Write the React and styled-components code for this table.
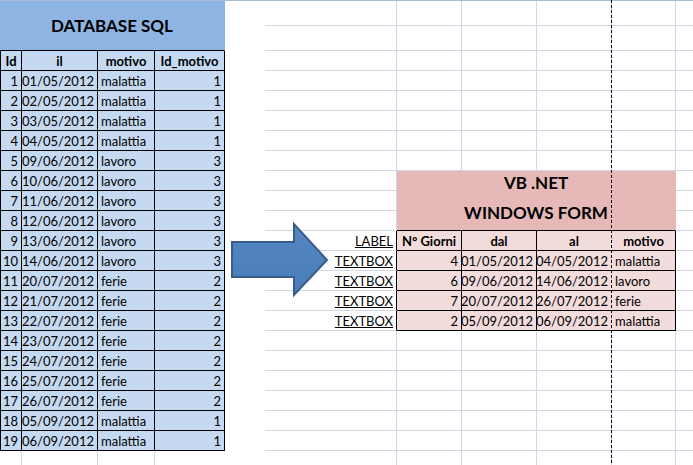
import React from 'react';
import styled, { createGlobalStyle } from 'styled-components';

/* Excel 2007 palette */
const GRID = '#D0D7E5';
const LINE = '#000';
const NONE = 'transparent';
const BLUE_HEAD = '#8DB4E3';
const BLUE_CELL = '#C5D9F1';
const PINK_HEAD = '#E6B9B8';
const PINK_CELL = '#F2DCDB';

const GlobalStyle = createGlobalStyle`
  html, body {
    margin: 0;
    padding: 0;
    background: #fff;
    overflow: hidden;
  }
  body {
    font-family: Lato, "Open Sans", "Liberation Sans", sans-serif;
    font-size: 13px;
    color: #000;
  }
`;

const Page = styled.div`
  position: relative;
  width: 693px;
  height: 465px;
  overflow: hidden;
`;

/* the worksheet: columns and rows are the spreadsheet's own sizes */
const Sheet = styled.div`
  display: grid;
  grid-template-columns: 22px 76px 57px 70px 40px 132px 65px 75px 75px 64px 40px;
  grid-template-rows: 25px 25px repeat(21, 20px);
  border-top: 1px solid #A8BCD5;
`;

const Cell = styled.div`
  display: flex;
  align-items: center;
  justify-content: ${(p) => (p.$align === 'right' ? 'flex-end' : p.$align === 'center' ? 'center' : 'flex-start')};
  padding: 0 3px;
  overflow: hidden;
  white-space: nowrap;
  background: ${(p) => p.$fill || '#fff'};
  border-right: 1px solid ${(p) => p.$right || GRID};
  border-bottom: 1px solid ${(p) => p.$bottom || GRID};
  border-left: ${(p) => (p.$left ? `1px solid ${p.$left}` : 'none')};
  font-weight: ${(p) => (p.$bold ? 700 : 400)};
  text-decoration: ${(p) => (p.$underline ? 'underline' : 'none')};
  grid-column: span ${(p) => p.$cols || 1};
  grid-row: span ${(p) => p.$rows || 1};
`;

/* merged title cells (DATABASE SQL, VB .NET) */
const Banner = styled(Cell)`
  flex-direction: column;
  justify-content: center;
  font-size: 17px;
  font-weight: 700;
  line-height: ${(p) => p.$lh || 'normal'};
  padding-bottom: ${(p) => p.$lift || 0}px;
`;

/* the dashed page-break line Excel draws over the sheet */
const PageBreak = styled.div`
  position: absolute;
  left: 611px;
  top: 0;
  width: 1px;
  height: 100%;
  background: repeating-linear-gradient(to bottom, #000 0 3px, transparent 3px 5px);
`;

/* floating block-arrow shape */
const ArrowShape = styled.svg`
  position: absolute;
  left: 228px;
  top: 220px;
`;

const LEFT_ROWS = [
  [1, '01/05/2012', 'malattia', 1],
  [2, '02/05/2012', 'malattia', 1],
  [3, '03/05/2012', 'malattia', 1],
  [4, '04/05/2012', 'malattia', 1],
  [5, '09/06/2012', 'lavoro', 3],
  [6, '10/06/2012', 'lavoro', 3],
  [7, '11/06/2012', 'lavoro', 3],
  [8, '12/06/2012', 'lavoro', 3],
  [9, '13/06/2012', 'lavoro', 3],
  [10, '14/06/2012', 'lavoro', 3],
  [11, '20/07/2012', 'ferie', 2],
  [12, '21/07/2012', 'ferie', 2],
  [13, '22/07/2012', 'ferie', 2],
  [14, '23/07/2012', 'ferie', 2],
  [15, '24/07/2012', 'ferie', 2],
  [16, '25/07/2012', 'ferie', 2],
  [17, '26/07/2012', 'ferie', 2],
  [18, '05/09/2012', 'malattia', 1],
  [19, '06/09/2012', 'malattia', 1],
];

const LEFT_HEAD = ['Id', 'il', 'motivo', 'Id_motivo'];
const LEFT_ALIGN = ['right', 'right', 'left', 'right'];

const RIGHT_HEAD = ['N° Giorni', 'dal', 'al', 'motivo'];
const RIGHT_ROWS = [
  [4, '01/05/2012', '04/05/2012', 'malattia'],
  [6, '09/06/2012', '14/06/2012', 'lavoro'],
  [7, '20/07/2012', '26/07/2012', 'ferie'],
  [2, '05/09/2012', '06/09/2012', 'malattia'],
];
const RIGHT_ALIGN = ['right', 'right', 'right', 'left'];

const ROW_COUNT = 23;
const COL_COUNT = 11;

function buildCells() {
  const cells = [];
  for (let r = 0; r < ROW_COUNT; r++) {
    for (let c = 0; c < COL_COUNT; c++) {
      const key = `${r}-${c}`;

      /* merged "DATABASE SQL" title */
      if (r < 2 && c < 4) {
        if (r === 0 && c === 0) {
          cells.push(
            <Banner key={key} $cols={4} $rows={2} $fill={BLUE_HEAD} $bottom={LINE} $right={NONE}>
              DATABASE SQL
            </Banner>
          );
        }
        continue;
      }

      /* merged "VB .NET / WINDOWS FORM" title */
      if (r >= 8 && r <= 10 && c >= 6 && c <= 9) {
        if (r === 8 && c === 6) {
          cells.push(
            <Banner key={key} $cols={4} $rows={3} $fill={PINK_HEAD} $bottom={LINE} $right={NONE} $lh="30px" $lift={6}>
              <span>VB .NET</span>
              <span>WINDOWS FORM</span>
            </Banner>
          );
        }
        continue;
      }

      /* white-filled spacer column, hides its gridlines */
      if (c === 4) {
        cells.push(<Cell key={key} $right={NONE} $bottom={NONE} />);
        continue;
      }

      /* left table: header + 19 records */
      if (r >= 2 && r <= 21 && c < 4) {
        const isHead = r === 2;
        const value = isHead ? LEFT_HEAD[c] : LEFT_ROWS[r - 3][c];
        cells.push(
          <Cell
            key={key}
            $fill={BLUE_CELL}
            $right={LINE}
            $bottom={LINE}
            $left={c === 0 ? LINE : undefined}
            $bold={isHead}
            $align={isHead ? 'center' : LEFT_ALIGN[c]}
          >
            {value}
          </Cell>
        );
        continue;
      }

      /* right table: labels column */
      if (r >= 11 && r <= 15 && c === 5) {
        cells.push(
          <Cell key={key} $right={LINE} $align="right" $underline>
            {r === 11 ? 'LABEL' : 'TEXTBOX'}
          </Cell>
        );
        continue;
      }

      /* right table: header + 4 records */
      if (r >= 11 && r <= 15 && c >= 6 && c <= 9) {
        const isHead = r === 11;
        const i = c - 6;
        const value = isHead ? RIGHT_HEAD[i] : RIGHT_ROWS[r - 12][i];
        cells.push(
          <Cell
            key={key}
            $fill={PINK_CELL}
            $right={c === 8 ? NONE : LINE}
            $bottom={LINE}
            $bold={isHead}
            $align={isHead ? 'center' : RIGHT_ALIGN[i]}
          >
            {value}
          </Cell>
        );
        continue;
      }

      /* below the left table the spacer hides the D/E gridline */
      if (c === 3 && r === 22) {
        cells.push(<Cell key={key} $right={NONE} />);
        continue;
      }

      cells.push(<Cell key={key} />);
    }
  }
  return cells;
}

function Arrow() {
  return (
    <ArrowShape width="104" height="80" viewBox="0 0 104 80">
      <defs>
        <linearGradient id="arrowFill" x1="0" y1="0" x2="0" y2="1">
          <stop offset="0" stopColor="#5587C3" />
          <stop offset="1" stopColor="#4A7CB8" />
        </linearGradient>
      </defs>
      <polygon
        points="4,22 66,22 66,4 99,40 66,75 66,57 4,57"
        fill="url(#arrowFill)"
        stroke="#385D8A"
        strokeWidth="2"
        strokeLinejoin="miter"
      />
    </ArrowShape>
  );
}

export default function App() {
  return (
    <>
      <GlobalStyle />
      <Page>
        <Sheet>{buildCells()}</Sheet>
        <PageBreak />
        <Arrow />
      </Page>
    </>
  );
}
